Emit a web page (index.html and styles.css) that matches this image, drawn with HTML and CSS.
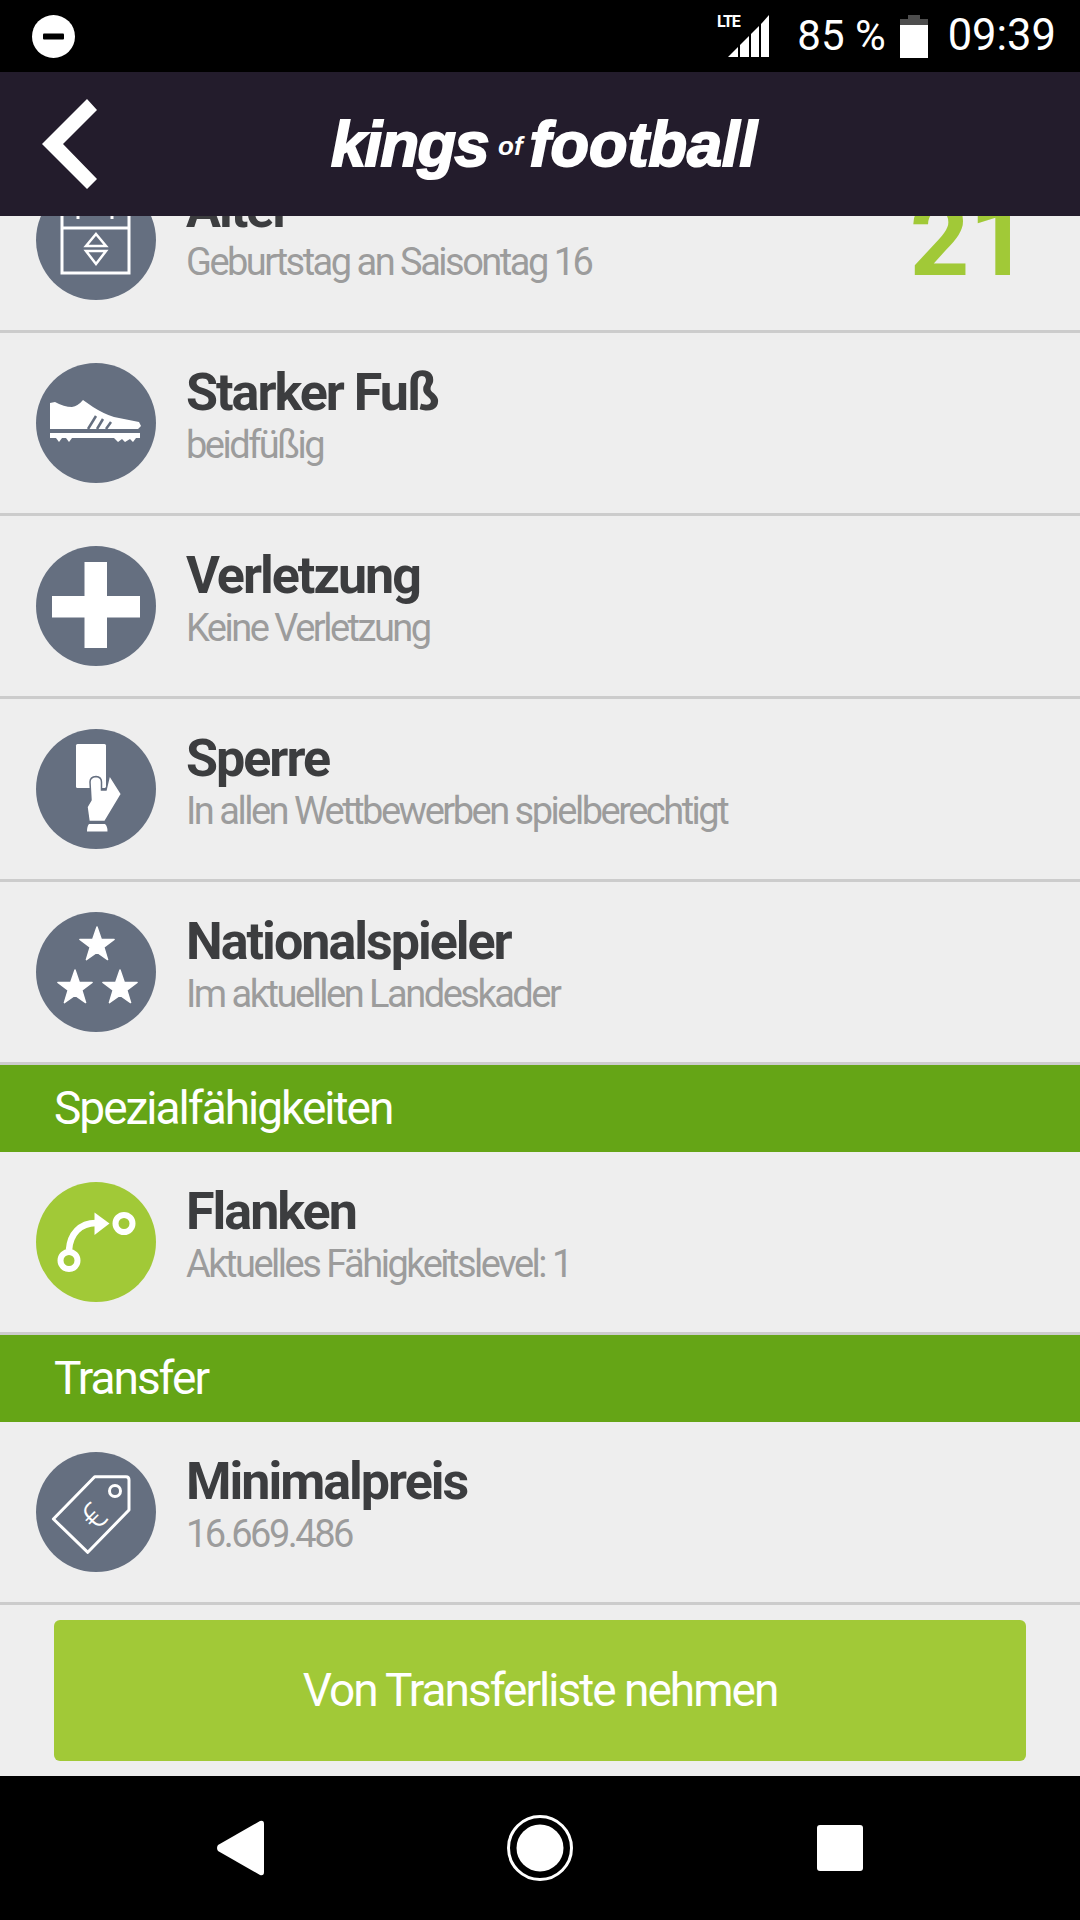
FILE: index.html
```html
<!DOCTYPE html>
<html lang="de">
<head>
    <meta charset="UTF-8">
    <meta name="viewport" content="width=device-width, initial-scale=1.0">
    <title>Kings of Football</title>
    <link rel="stylesheet" href="styles.css">
</head>
<body>
    <div class="app">
        <div class="statusbar">
            <svg class="dnd" viewBox="0 0 43 43"><circle cx="21.5" cy="21.5" r="21.5" fill="#fff"/><rect x="11" y="18.5" width="21" height="6" rx="1" fill="#000"/></svg>
            <div class="status-right">
                <svg class="signal" viewBox="0 0 54 44">
                    <text x="1" y="13" class="lte">LTE</text>
                    <polygon points="12,43 22,33 22,43" fill="#fff"/>
                    <polygon points="24,43 24,31 33,22 33,43" fill="#fff"/>
                    <polygon points="35,43 35,20 43,12 43,43" fill="#fff"/>
                    <polygon points="45,43 45,10 53,1 53,43" fill="#fff"/>
                </svg>
                <span class="battery-text">85 %</span>
                <svg class="battery" viewBox="0 0 28 43">
                    <rect x="8" y="0" width="12" height="5" fill="#4d4d4d"/>
                    <rect x="0" y="4" width="28" height="7" fill="#4d4d4d"/>
                    <rect x="0" y="10" width="28" height="33" fill="#fff"/>
                </svg>
                <span class="clock">09:39</span>
            </div>
        </div>

        <div class="header">
            <svg class="back" viewBox="0 0 56 90"><polygon points="46,0 56,11 22,45 56,80 46,90 1,45" fill="#fff"/></svg>
            <div class="logo"><span class="logo-big">kings</span><span class="logo-of">of</span><span class="logo-big football">football</span></div>
        </div>

        <div class="list">
            <div class="row row-scrolled">
                <div class="icon">
                    <svg viewBox="0 0 120 120">
                        <rect x="26" y="16" width="67" height="77" fill="none" stroke="#fff" stroke-width="3"/>
                        <line x1="26" y1="48" x2="93" y2="48" stroke="#fff" stroke-width="3"/>
                        <line x1="42" y1="34" x2="42" y2="39" stroke="#fff" stroke-width="3"/>
                        <line x1="76" y1="34" x2="76" y2="39" stroke="#fff" stroke-width="3"/>
                        <polygon points="60,54 70,66 50,66" fill="none" stroke="#fff" stroke-width="2.5"/>
                        <polygon points="60,84 70,71 50,71" fill="none" stroke="#fff" stroke-width="2.5"/>
                    </svg>
                </div>
                <div class="texts">
                    <div class="title">Alter</div>
                    <div class="sub">Geburtstag an Saisontag 16</div>
                </div>
                <div class="value">21</div>
            </div>

            <div class="row">
                <div class="icon">
                    <svg viewBox="0 0 120 120">
                        <path d="M14 40 L19 39 Q28 44 36 44 Q42 43 47 37 L57 44 Q68 51 78 54 L103 59 L105 63 L102 66 L14 66 Z" fill="#fff"/>
                        <path d="M52 66 L60 53 M61 66 L67 56 M70 66 L75 59" stroke="#656f80" stroke-width="2.5" fill="none"/>
                        <path d="M14 70 H104 V75 L100 75 L97 79 L94 76 L89 79 L86 76 L82 79 L78 75 L36 75 L33 79 L30 75 L26 75 L23 79 L20 75 L14 75 Z" fill="#fff"/>
                    </svg>
                </div>
                <div class="texts">
                    <div class="title">Starker Fuß</div>
                    <div class="sub">beidfüßig</div>
                </div>
            </div>

            <div class="row">
                <div class="icon">
                    <svg viewBox="0 0 120 120"><path d="M48.5 16 H71 V50 H104 V71.5 H71 V102 H48.5 V71.5 H16 V50 H48.5 Z" fill="#fff"/></svg>
                </div>
                <div class="texts">
                    <div class="title">Verletzung</div>
                    <div class="sub">Keine Verletzung</div>
                </div>
            </div>

            <div class="row">
                <div class="icon">
                    <svg viewBox="0 0 120 120">
                        <rect x="40" y="15" width="30" height="44" rx="1.5" fill="#fff"/>
                        <path d="M73.5 46 L85.5 65 L69 92.5 L53 92.5 L51 78 L55 71 L54 53 Q54 48 60 47.5 Q65.5 48 65.5 53 L65.5 61 L70 61 Z" fill="#fff" stroke="#656f80" stroke-width="1.5"/>
                        <path d="M53 95 H69 Q71.5 97 71.5 102.5 H51 Q51 97 53 95 Z" fill="#fff"/>
                    </svg>
                </div>
                <div class="texts">
                    <div class="title">Sperre</div>
                    <div class="sub">In allen Wettbewerben spielberechtigt</div>
                </div>
            </div>

            <div class="row">
                <div class="icon">
                    <svg viewBox="0 0 120 120">
                        <polygon transform="translate(61 33)" points="0,-18 4.2,-5.8 17.1,-5.6 6.8,2.2 10.6,14.6 0,7.2 -10.6,14.6 -6.8,2.2 -17.1,-5.6 -4.2,-5.8" fill="#fff" stroke="#fff" stroke-width="1.5" stroke-linejoin="round"/>
                        <polygon transform="translate(39 76)" points="0,-18 4.2,-5.8 17.1,-5.6 6.8,2.2 10.6,14.6 0,7.2 -10.6,14.6 -6.8,2.2 -17.1,-5.6 -4.2,-5.8" fill="#fff" stroke="#fff" stroke-width="1.5" stroke-linejoin="round"/>
                        <polygon transform="translate(84 76)" points="0,-18 4.2,-5.8 17.1,-5.6 6.8,2.2 10.6,14.6 0,7.2 -10.6,14.6 -6.8,2.2 -17.1,-5.6 -4.2,-5.8" fill="#fff" stroke="#fff" stroke-width="1.5" stroke-linejoin="round"/>
                    </svg>
                </div>
                <div class="texts">
                    <div class="title">Nationalspieler</div>
                    <div class="sub">Im aktuellen Landeskader</div>
                </div>
            </div>

            <div class="section">Spezialfähigkeiten</div>

            <div class="row">
                <div class="icon icon-lime">
                    <svg viewBox="0 0 120 120">
                        <circle cx="33" cy="78.5" r="8.5" fill="none" stroke="#fff" stroke-width="6"/>
                        <circle cx="88" cy="41.5" r="8.5" fill="none" stroke="#fff" stroke-width="6"/>
                        <path d="M33 68 C34 52 44 41 60 41" fill="none" stroke="#fff" stroke-width="6.5"/>
                        <polygon points="58.5,30.5 73.5,41.5 58.5,53" fill="#fff"/>
                    </svg>
                </div>
                <div class="texts">
                    <div class="title">Flanken</div>
                    <div class="sub">Aktuelles Fähigkeitslevel: 1</div>
                </div>
            </div>

            <div class="section">Transfer</div>

            <div class="row">
                <div class="icon">
                    <svg viewBox="0 0 120 120">
                        <path d="M58.7 24.7 H90 Q93 24.7 93 28 V58 L51.8 100.3 L17.4 67 Z" fill="none" stroke="#fff" stroke-width="3" stroke-linejoin="round"/>
                        <circle cx="79" cy="39" r="5.5" fill="none" stroke="#fff" stroke-width="3"/>
                        <text class="euro" x="57.5" y="77.3" transform="rotate(-45 57.5 64.5)">€</text>
                    </svg>
                </div>
                <div class="texts">
                    <div class="title">Minimalpreis</div>
                    <div class="sub">16.669.486</div>
                </div>
            </div>

            <div class="action">
                <div class="button">Von Transferliste nehmen</div>
            </div>
        </div>

        <div class="navbar">
            <svg class="nav-back" viewBox="0 0 48 56"><path d="M44 1 Q48 0 48 4 V52 Q48 56 44 55 L2 31 Q0 28 2 25 Z" fill="#fff"/></svg>
            <svg class="nav-home" viewBox="0 0 66 66"><circle cx="33" cy="33" r="31.5" fill="none" stroke="#fff" stroke-width="3"/><circle cx="33" cy="33" r="23.5" fill="#fff"/></svg>
            <div class="nav-square"></div>
        </div>
    </div>
</body>
</html>
```

FILE: styles.css
```css
body {
    margin: 0;
    font-family: "Roboto", sans-serif;
    background: #000;
}
.app {
    width: 1080px;
    height: 1920px;
    display: flex;
    flex-direction: column;
    overflow: hidden;
}

/* status bar */
.statusbar {
    height: 72px;
    flex: none;
    background: #000;
    color: #fff;
    display: flex;
    align-items: center;
    justify-content: space-between;
    padding: 0 24px 0 32px;
}
.dnd {
    width: 43px;
    height: 43px;
}
.status-right {
    display: flex;
    align-items: center;
}
.signal {
    width: 54px;
    height: 44px;
    margin-right: 27px;
    overflow: visible;
}
.lte {
    font-family: "Roboto", sans-serif;
    font-size: 16px;
    font-weight: 700;
    fill: #fff;
    letter-spacing: -1px;
}
.battery-text {
    font-size: 42px;
    line-height: 72px;
}
.clock {
    font-size: 43.5px;
    line-height: 72px;
}
.battery {
    width: 28px;
    height: 43px;
    margin: 0 20px 0 14px;
}

/* header */
.header {
    height: 144px;
    flex: none;
    background: #231c2c;
    display: flex;
    align-items: center;
    padding-left: 41px;
}
.back {
    width: 56px;
    height: 90px;
}
.logo {
    margin-left: 234px;
    color: #fff;
    font-family: "Liberation Sans", sans-serif;
    font-style: italic;
    font-weight: 700;
    white-space: nowrap;
}
.logo-big {
    font-size: 63px;
    letter-spacing: -1.5px;
    -webkit-text-stroke: 2px #fff;
}
.football {
    letter-spacing: 0;
}
.logo-of {
    font-size: 26px;
    vertical-align: 11px;
    margin: 0 7px 0 10px;
}

/* list */
.list {
    flex: 1;
    background: #eee;
    overflow: hidden;
}
.row {
    height: 183px;
    box-sizing: border-box;
    border-bottom: 3px solid #ccc;
    display: flex;
    align-items: flex-start;
    padding: 30px 51px 0 36px;
}
.row-scrolled {
    margin-top: -66px;
}
.icon {
    width: 120px;
    height: 120px;
    flex: none;
    border-radius: 50%;
    background: #656f80;
}
.icon svg {
    display: block;
    width: 120px;
    height: 120px;
}
.icon-lime {
    background: #a1c937;
}
.euro {
    font-family: "Roboto", sans-serif;
    font-size: 36px;
    font-weight: 300;
    fill: #fff;
    text-anchor: middle;
}
.texts {
    margin-left: 30px;
    padding-top: 4px;
}
.title {
    font-size: 52px;
    line-height: 52px;
    font-weight: 700;
    letter-spacing: -2px;
    color: #3c3d3f;
}
.sub {
    margin-top: 5px;
    font-size: 38px;
    line-height: 42px;
    font-weight: 400;
    letter-spacing: -2.5px;
    color: #9c9c9c;
}
.value {
    margin-left: auto;
    font-size: 104px;
    line-height: 104px;
    font-weight: 700;
    color: #a1c937;
    margin-top: 8px;
}
.section {
    height: 87px;
    line-height: 87px;
    background: #65a516;
    color: #fff;
    padding-left: 54px;
    font-size: 46px;
    letter-spacing: -2px;
}
.action {
    padding: 15px 54px;
}
.button {
    height: 141px;
    line-height: 141px;
    border-radius: 6px;
    background: #a1c937;
    color: #fff;
    text-align: center;
    font-size: 46px;
    letter-spacing: -2px;
}

/* android nav */
.navbar {
    height: 144px;
    flex: none;
    background: #000;
    display: flex;
    align-items: center;
    padding-left: 216px;
}
.nav-back {
    width: 48px;
    height: 56px;
}
.nav-home {
    width: 66px;
    height: 66px;
    margin-left: 243px;
}
.nav-square {
    width: 46px;
    height: 46px;
    margin-left: 244px;
    border-radius: 3px;
    background: #fff;
}
```
